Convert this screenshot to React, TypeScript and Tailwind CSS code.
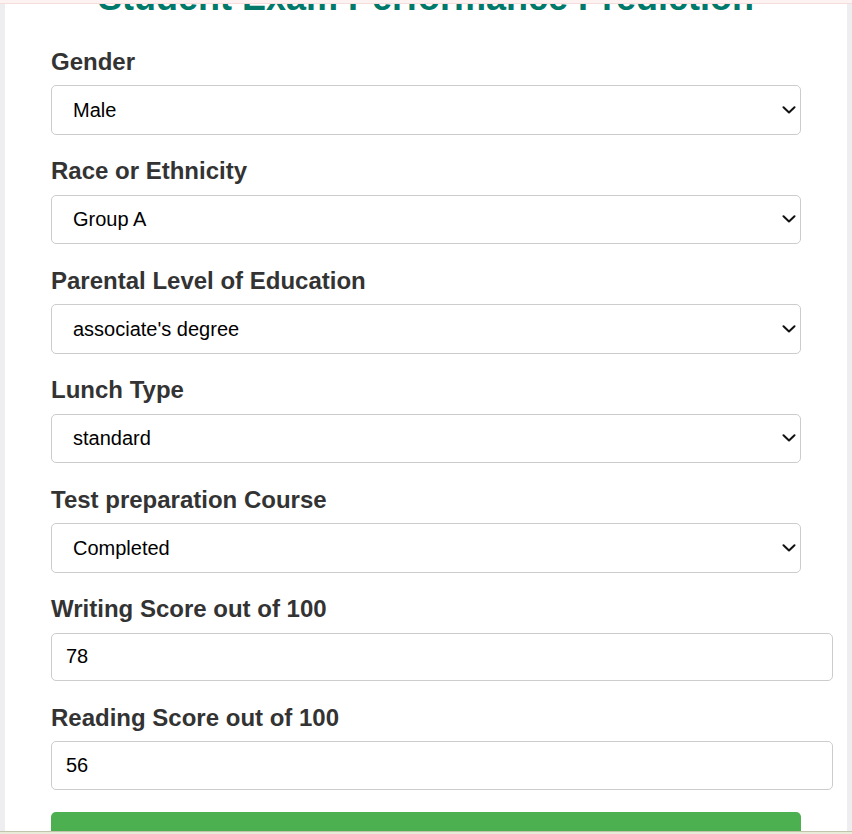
import React from "react";

const selects = [
  { label: "Gender", value: "Male", options: ["Male", "Female"] },
  { label: "Race or Ethnicity", value: "Group A", options: ["Group A", "Group B", "Group C", "Group D", "Group E"] },
  {
    label: "Parental Level of Education",
    value: "associate's degree",
    options: ["associate's degree", "bachelor's degree", "high school", "master's degree", "some college", "some high school"],
  },
  { label: "Lunch Type", value: "standard", options: ["standard", "free/reduced"] },
  { label: "Test preparation Course", value: "Completed", options: ["Completed", "None"] },
];

const scores = [
  { label: "Writing Score out of 100", value: "78" },
  { label: "Reading Score out of 100", value: "56" },
];

function Chevron() {
  return (
    <svg
      className="pointer-events-none absolute right-[5px] top-1/2 -translate-y-1/2"
      width="14"
      height="8"
      viewBox="0 0 14 8"
      fill="none"
    >
      <path d="M1.5 1.2 7 6.5l5.5-5.3" stroke="#111" strokeWidth="2" strokeLinecap="round" strokeLinejoin="round" />
    </svg>
  );
}

export default function App() {
  return (
    <div className="relative h-[834px] overflow-hidden bg-[#eeeef0] font-['Liberation_Sans',Arial,sans-serif]">
      {/* page is scrolled down a bit, title runs off the top */}
      <div className="-mt-[20.5px] mx-[5px] bg-white px-[46px] pb-10">
        <h1 className="mb-[32.2px] text-center text-[36px] font-bold leading-[36px] text-[#00796b]">
          Student Exam Performance Prediction
        </h1>

        <form className="flex flex-col">
          {selects.map((s) => (
            <div key={s.label} className="mb-[22.5px]">
              <label className="mb-[9.5px] block text-[24px] font-bold leading-[28px] text-[#333333]">{s.label}</label>
              <div className="relative w-[750px]">
                <select
                  defaultValue={s.value}
                  className="h-[49.5px] w-full appearance-none rounded-[5px] border border-[#cccccc] bg-white pl-[21px] pr-8 text-[20px] text-black outline-none"
                >
                  {s.options.map((o) => (
                    <option key={o}>{o}</option>
                  ))}
                </select>
                <Chevron />
              </div>
            </div>
          ))}

          {scores.map((s) => (
            <div key={s.label} className="mb-[22.5px]">
              <label className="mb-[9.5px] block text-[24px] font-bold leading-[28px] text-[#333333]">{s.label}</label>
              <input
                type="number"
                defaultValue={s.value}
                className="h-[48.5px] w-[782px] rounded-[5px] border border-[#cccccc] bg-white px-[14px] text-[20px] text-black outline-none"
              />
            </div>
          ))}

          <button type="button" className="h-[72px] w-[750px] rounded-[5px] bg-[#4caf50] text-[20px] font-bold text-white">
            Predict your Maths Score
          </button>
        </form>
      </div>

      <div className="absolute inset-x-0 top-0 h-[4px] border-b border-[#f5dddd] bg-[#fdf2f2]" />
      <div className="absolute inset-x-0 bottom-0 h-[3px] border-t border-[#c2c4ac] bg-[#e8ebd8]" />
    </div>
  );
}
